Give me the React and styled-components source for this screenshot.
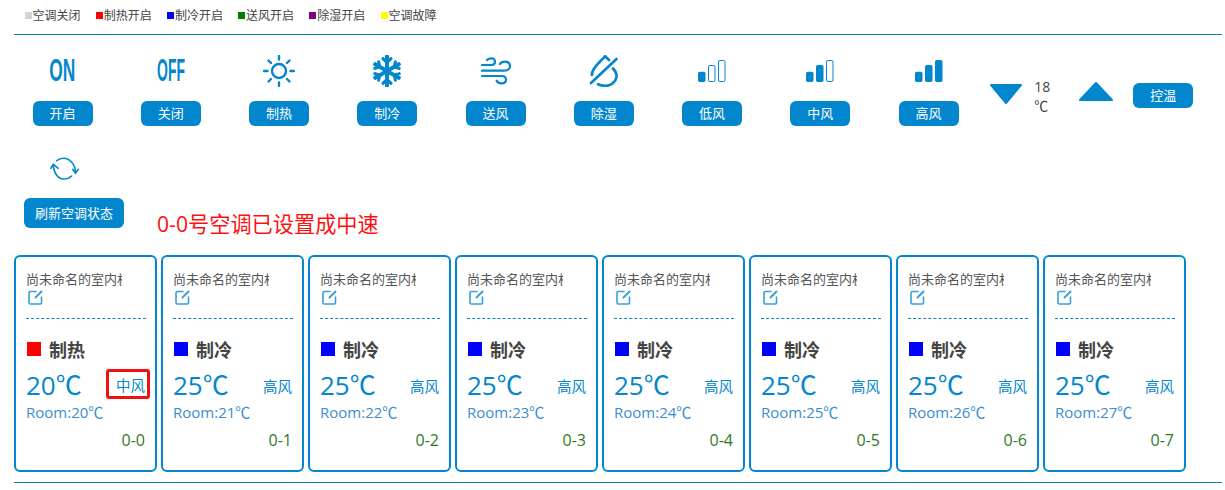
import React from "react";
import styled, { createGlobalStyle } from "styled-components";
import { FaSnowflake } from "react-icons/fa";

const BLUE = "#0286cd";
const FONT = `"Open Sans", "Noto Sans CJK SC", sans-serif`;

const Global = createGlobalStyle`
  html, body { margin: 0; padding: 0; background: #fff; }
  body { font-family: ${FONT}; color: #333; overflow: hidden; }
  * { box-sizing: border-box; }
`;

const Page = styled.div`
  width: 1225px;
  height: 490px;
  padding-left: 14px;
`;
const Legend = styled.div`
  width: 1208px;
  height: 35px;
  padding: 6px 0 0 10.5px;
  display: flex;
  gap: 15.2px;
  border-bottom: 1px solid ${BLUE};
`;
const LegendItem = styled.div`
  display: flex;
  align-items: center;
  height: 18px;
  font-size: 12px;
  color: #444;
`;
const Swatch = styled.i`
  width: 7px;
  height: 7px;
  margin-right: 1px;
  background: ${(p) => p.$c};
`;
const Toolbar = styled.div`
  display: flex;
  padding: 18px 0 0 18.6px;
  gap: 48.25px;
  height: 107px;
`;
const Control = styled.div`
  width: 60px;
  height: 73px;
  display: flex;
  flex-direction: column;
  align-items: center;
  justify-content: space-between;
`;
const IconBox = styled.div`
  height: 36px;
  width: 60px;
  display: flex;
  align-items: center;
  justify-content: center;
  color: ${BLUE};
`;
const Button = styled.button`
  width: ${(p) => p.$w || 60}px;
  height: ${(p) => p.$h || 25}px;
  flex: none;
  border: 0;
  border-radius: 6px;
  padding: 0;
  background: ${BLUE};
  color: #fff;
  font-family: ${FONT};
  font-size: 13px;
  line-height: 1;
`;
const Word = styled.span`
  font-family: "Liberation Sans", sans-serif;
  font-weight: 700;
  font-size: 31px;
  line-height: 36px;
  color: ${BLUE};
  display: inline-block;
  transform: scaleX(${(p) => p.$sx});
`;
const TempGroup = styled.div`
  display: flex;
  align-items: flex-start;
  margin-left: -17.6px;
  padding-top: 25px;
`;
const TempValue = styled.div`
  width: 20px;
  margin: -1px 24px 0 11px;
  font-size: 14px;
  line-height: 19px;
  color: #444;
`;
const TempButton = styled(Button)`
  margin-left: 19px;
  margin-top: 5px;
`;
const Arrow = styled.svg`
  display: block;
  flex: none;
  margin-top: ${(p) => p.$top || 0}px;
`;
const SecondRow = styled.div`
  display: flex;
  align-items: flex-end;
  height: 114px;
  padding: 6px 0 0 10px;
`;
const RefreshControl = styled.div`
  width: 100px;
  margin-bottom: 28px;
  display: flex;
  flex-direction: column;
  align-items: center;
`;
const RefreshIcon = styled.svg`
  display: block;
  margin: 0 0 17px -18px;
`;
const Message = styled.div`
  margin: 0 0 17px 33px;
  font-size: 21.2px;
  line-height: 30px;
  color: #ff0f0f;
`;
const Cards = styled.div`
  display: flex;
  gap: 4px;
  width: 1208px;
  height: 228px;
  padding-bottom: 9px;
  border-bottom: 1px solid ${BLUE};
  margin-top: -1px;
`;
const Card = styled.div`
  width: 143px;
  height: 217px;
  flex: none;
  border: 2px solid ${BLUE};
  border-radius: 6px;
  padding: 13px 13px 0 10px;
  display: flex;
  flex-direction: column;
`;
const CardName = styled.div`
  width: 96px;
  height: 18px;
  overflow: hidden;
  white-space: nowrap;
  font-size: 13px;
  line-height: 18px;
  color: #555;
`;
const Edit = styled.svg`
  display: block;
  margin: 2px 0 0 2px;
  flex: none;
`;
const Dashed = styled.div`
  margin-top: 13px;
  width: 120px;
  height: 1px;
  flex: none;
  border-top: 1px dashed ${BLUE};
`;
const Status = styled.div`
  margin-top: 20px;
  height: 20px;
  display: flex;
  align-items: center;
  font-size: 18px;
  font-weight: 700;
  color: #444;
`;
const StatusDot = styled.i`
  width: 14px;
  height: 14px;
  margin: 0 8px 0 1px;
  background: ${(p) => p.$c};
`;
const TempRow = styled.div`
  margin-top: 11px;
  width: 120px;
  height: 30px;
  display: flex;
  align-items: center;
  justify-content: space-between;
  color: ${BLUE};
`;
const SetTemp = styled.div`
  font-size: 26px;
  line-height: 30px;
`;
const Fan = styled.span`
  font-size: 14.5px;
  line-height: 20px;
  margin: 4px 1px 0 0;
  color: ${BLUE};
  ${(p) =>
    p.$active &&
    `
    margin: -2px -4px 0 0;
    width: 44px;
    height: 30px;
    border: 3px solid #f01010;
    border-radius: 3px;
    padding: 4px 0 0 7px;
    white-space: nowrap;
  `}
`;
const Room = styled.div`
  margin-top: 2px;
  font-size: 15px;
  line-height: 20px;
  color: #3a8dcf;
`;
const Id = styled.div`
  margin-top: 8px;
  width: 119px;
  text-align: right;
  font-size: 16px;
  line-height: 20px;
  color: #2d7a1e;
`;

const Sun = () => (
  <svg width="32" height="32" viewBox="0 0 32 32" fill="none" stroke={BLUE} strokeWidth="2.4" strokeLinecap="round">
    <circle cx="16" cy="16" r="7" />
    <path d="M16 1v3.500M16 27.500V31M1 16h3.500M27.500 16H31M5.500 5.500l2.500 2.500M24 24l2.500 2.500M5.500 26.500l2.500-2.500M24 8l2.500-2.500" />
  </svg>
);
const Wind = () => (
  <svg width="30" height="28" viewBox="0 0 30 28" fill="none" stroke={BLUE} strokeWidth="2.200" strokeLinecap="round">
    <path d="M1 8h9.700c2 0 3.300-1.500 3.300-3.400S12.500 1.300 10.700 1.300 7 1.800 6 3" />
    <path d="M1 13.700h21.300c3.500 0 6.700-1.500 6.700-4.500s-2.200-4.500-5-4.500-4.300 1-5 2.300" />
    <path d="M1 19h19.700c2.800 0 4.300 1.500 4.300 3.700s-1.800 3.600-4.300 3.600-4.300-1-5-2.600" />
  </svg>
);
const DropOff = () => (
  <svg width="30" height="32" viewBox="0 0 30 32" fill="none" stroke={BLUE} strokeWidth="2.700" strokeLinecap="round" strokeLinejoin="round">
    <path d="M27.500 4L2 28" />
    <path d="M20 5L16 1.200C12 6.500 3 12 2.800 20" />
    <path d="M24 13.500C26.500 16 27.800 19 27.500 22 26.800 27 22 30.800 16.500 30.800 13.500 30.800 11 30.300 9 29.300" />
  </svg>
);
const Signal = ({ level }) => (
  <svg width="30" height="24" viewBox="0 0 30 24">
    {[
      [1, 12.700, 10.300],
      [11, 6, 17],
      [21, 1, 22],
    ].map(([x, y, h], i) =>
      i < level ? (
        <rect key={x} x={x} y={y} width="7.500" height={h} rx="1.800" fill={BLUE} />
      ) : (
        <rect key={x} x={x + 0.5} y={y + 0.5} width="6.500" height={h - 1} rx="1.500" fill="none" stroke={BLUE} />
      )
    )}
  </svg>
);
const EditIcon = () => (
  <Edit width="15" height="15" viewBox="0 0 15 15" fill="none" stroke="#36a0da" strokeWidth="1.600" strokeLinecap="round">
    <path d="M8 1.500H2.200Q1 1.500 1 2.700V12.800Q1 14 2.200 14H12.300Q13.500 14 13.500 12.800V7" />
    <path d="M7.500 7.500L13.500 1.500" strokeWidth="2" />
  </Edit>
);

const controls = [
  ["开启", <Word $sx={0.56}>ON</Word>],
  ["关闭", <Word $sx={0.45}>OFF</Word>],
  ["制热", <Sun />],
  ["制冷", <FaSnowflake size={32} />],
  ["送风", <Wind />],
  ["除湿", <DropOff />],
  ["低风", <Signal level={1} />],
  ["中风", <Signal level={2} />],
  ["高风", <Signal level={3} />],
];

const legend = [
  ["空调关闭", "#d3d3d3"],
  ["制热开启", "#ff0000"],
  ["制冷开启", "#0000ff"],
  ["送风开启", "#008000"],
  ["除湿开启", "#800080"],
  ["空调故障", "#ffff00"],
];

const cards = Array.from({ length: 8 }, (_, i) => ({
  id: `0-${i}`,
  mode: i === 0 ? "制热" : "制冷",
  color: i === 0 ? "#ff0000" : "#0000ff",
  temp: i === 0 ? 20 : 25,
  fan: i === 0 ? "中风" : "高风",
  room: 20 + i,
  active: i === 0,
}));

export default function App() {
  return (
    <Page>
      <Global />
      <Legend>
        {legend.map(([t, c]) => (
          <LegendItem key={t}>
            <Swatch $c={c} />
            {t}
          </LegendItem>
        ))}
      </Legend>
      <Toolbar>
        {controls.map(([t, icon]) => (
          <Control key={t}>
            <IconBox>{icon}</IconBox>
            <Button>{t}</Button>
          </Control>
        ))}
        <TempGroup>
          <Arrow $top={5} width="34" height="22" viewBox="0 0 34 22">
            <path d="M2 2H32L17 20Z" fill={BLUE} stroke={BLUE} strokeWidth="2" strokeLinejoin="round" />
          </Arrow>
          <TempValue>18 ℃</TempValue>
          <Arrow $top={3} width="36" height="22" viewBox="0 0 36 22">
            <path d="M2 19H34L18 2Z" fill={BLUE} stroke={BLUE} strokeWidth="2" strokeLinejoin="round" />
          </Arrow>
          <TempButton>控温</TempButton>
        </TempGroup>
      </Toolbar>
      <SecondRow>
        <RefreshControl>
          <RefreshIcon width="30" height="24" viewBox="0 0 30 24" fill="none" stroke={BLUE} strokeWidth="1.600" strokeLinecap="round" strokeLinejoin="round">
            <path d="M25.500 15.500C25.500 7.500 20 1.300 13.500 1.300 11 1.300 8.500 2.200 6.700 3.700" />
            <path d="M22.700 12.300l2.800 4 2.800-4" />
            <path d="M3.300 7.500C3.300 15.500 8 22 13.500 22 16.500 22 19.500 21 21.700 19" />
            <path d="M0.800 11.300l2.600-4 4.800 4" />
          </RefreshIcon>
          <Button $w={100} $h={30}>刷新空调状态</Button>
        </RefreshControl>
        <Message>0-0号空调已设置成中速</Message>
      </SecondRow>
      <Cards>
        {cards.map((c) => (
          <Card key={c.id}>
            <CardName>尚未命名的室内机</CardName>
            <EditIcon />
            <Dashed />
            <Status>
              <StatusDot $c={c.color} />
              {c.mode}
            </Status>
            <TempRow>
              <SetTemp>{c.temp}℃</SetTemp>
              <Fan $active={c.active}>{c.fan}</Fan>
            </TempRow>
            <Room>Room:{c.room}℃</Room>
            <Id>{c.id}</Id>
          </Card>
        ))}
      </Cards>
    </Page>
  );
}
